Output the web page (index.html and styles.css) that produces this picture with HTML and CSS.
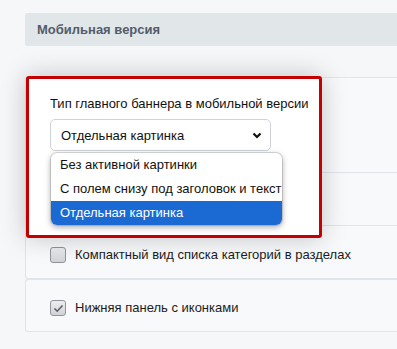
FILE: index.html
```html
<!DOCTYPE html>
<html lang="ru">
<head>
    <meta charset="UTF-8">
    <meta name="viewport" content="width=device-width, initial-scale=1.0">
    <title>Мобильная версия</title>
    <link rel="stylesheet" href="styles.css">
</head>
<body>
<div class="page">
    <div class="section-title">Мобильная версия</div>

    <div class="options">
        <div class="option option-banner"></div>
        <div class="option option-hidden"></div>
        <div class="option option-check">
            <span class="checkbox"></span>
            <span class="option-text">Компактный вид списка категорий в разделах</span>
        </div>
    </div>

    <div class="options">
        <div class="option option-check option-last">
            <span class="checkbox checked">
                <svg width="11" height="9" viewBox="0 0 11 9"><path d="M1.5 4.5 L4.2 7.2 L9.5 1.5" fill="none" stroke="#5a5f66" stroke-width="1.6"/></svg>
            </span>
            <span class="option-text">Нижняя панель с иконками</span>
        </div>
    </div>

    <!-- подсвеченная настройка поверх списка -->
    <div class="highlight">
        <div class="field-label">Тип главного баннера в мобильной версии</div>
        <div class="select">
            <span>Отдельная картинка</span>
            <svg class="chevron" width="10" height="7" viewBox="0 0 10 7"><path d="M1.5 1.5 L5 5 L8.5 1.5" fill="none" stroke="#111" stroke-width="2.2"/></svg>
        </div>
        <ul class="dropdown">
            <li>Без активной картинки</li>
            <li>С полем снизу под заголовок и текст</li>
            <li class="selected">Отдельная картинка</li>
        </ul>
    </div>
</div>
</body>
</html>
```

FILE: styles.css
```css
body {
    margin: 0;
    padding: 0;
    background-color: #f5f7f8;
    font-family: "Liberation Sans", Arial, sans-serif;
    font-size: 13px;
    color: #111;
}

.page {
    position: relative;
    padding: 13px 0 0 25px;
    height: 336px;
}

.section-title {
    height: 33px;
    line-height: 33px;
    padding-left: 12px;
    background: #e1e6e9;
    border-radius: 3px 0 0 3px;
    font-weight: bold;
    color: #535c69;
    margin-bottom: 31px;
}

.options {
    border: 1px solid #dfe5ea;
    border-right: none;
    border-radius: 3px 0 0 3px;
    background: #f7f9fa;
}

.option {
    box-sizing: border-box;
    border-top: 1px solid #dfe5ea;
}

.option:first-child {
    border-top: none;
}

.option-banner {
    height: 94px;
}

.option-hidden {
    height: 53px;
}

.option-check {
    display: flex;
    align-items: flex-start;
    height: 53px;
    padding: 21px 0 0 24px;
}

.option-last {
    height: 51px;
    padding-top: 20px;
}

.checkbox {
    box-sizing: border-box;
    width: 16px;
    height: 16px;
    border: 1px solid #8f959b;
    border-radius: 3px;
    background: linear-gradient(#eceef0, #d0d3d6);
    display: flex;
    align-items: center;
    justify-content: center;
    margin-right: 9px;
}

.option-text {
    line-height: 16px;
    color: #1c1c1c;
}

.highlight {
    position: absolute;
    left: 26px;
    top: 76px;
    width: 296px;
    height: 162px;
    box-sizing: border-box;
    border: 3px solid #c40000;
    border-radius: 3px;
    background: #fff;
    box-shadow: 0 0 26px rgba(0, 0, 0, 0.22);
    padding: 17px 0 0 21px;
}

.field-label {
    line-height: 16px;
    color: #111;
}

.select {
    box-sizing: border-box;
    width: 221px;
    height: 32px;
    margin-top: 7px;
    padding: 0 8px 0 10px;
    border: 1px solid #cdd3d8;
    border-radius: 5px;
    display: flex;
    align-items: center;
    justify-content: space-between;
    color: #111;
}

.dropdown {
    position: absolute;
    left: 22px;
    top: 74px;
    width: 231px;
    margin: 0;
    padding: 0;
    list-style: none;
    background: #fff;
    border-radius: 6px;
    overflow: hidden;
    box-shadow: 0 0 0 1px rgba(0, 0, 0, 0.12), 0 2px 6px rgba(0, 0, 0, 0.35);
}

.dropdown li {
    height: 24px;
    line-height: 24px;
    padding-left: 9px;
    white-space: nowrap;
    color: #111;
}

.dropdown li.selected {
    background: #1b6ad3;
    color: #fff;
}
```
